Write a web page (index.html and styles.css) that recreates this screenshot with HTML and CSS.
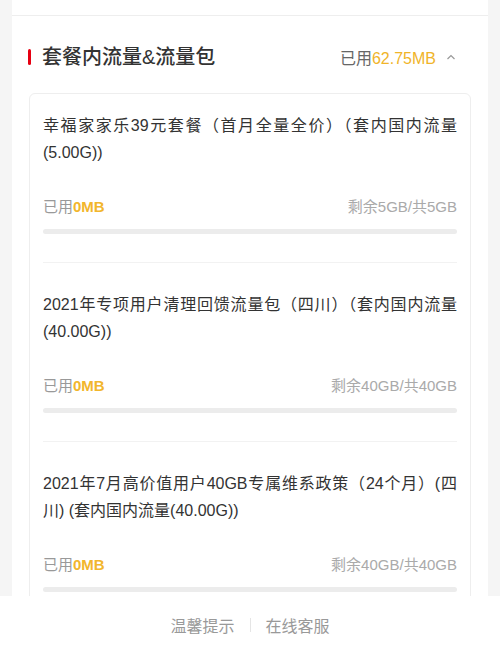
FILE: index.html
```html
<!DOCTYPE html>
<html lang="zh-CN">
<head>
  <meta charset="UTF-8" />
  <title>套餐内流量&amp;流量包</title>
  <meta name="viewport" content="width=device-width, initial-scale=1" />
  <link rel="stylesheet" href="styles.css">
</head>
<body>
  <div class="page">
    <div class="top-block"></div>

    <div class="section-head">
      <span class="mark"></span>
      <h2>套餐内流量&amp;流量包</h2>
      <div class="used-total">已用<span class="num">62.75MB</span></div>
      <svg class="caret" width="10" height="8" viewBox="0 0 10 8">
        <path d="M1.5 6 L5 2.5 L8.5 6" fill="none" stroke="#999" stroke-width="1.2" />
      </svg>
    </div>

    <div class="pkg-card">
      <div class="pkg">
        <div class="pkg-name">幸福家家乐39元套餐（首月全量全价）（套内国内流量(5.00G))</div>
        <div class="pkg-usage">
          <span class="used">已用<b>0MB</b></span>
          <span class="left">剩余5GB/共5GB</span>
        </div>
        <div class="bar"><div class="fill" style="width: 0%"></div></div>
      </div>
      <div class="pkg">
        <div class="pkg-name">2021年专项用户清理回馈流量包（四川）（套内国内流量(40.00G))</div>
        <div class="pkg-usage">
          <span class="used">已用<b>0MB</b></span>
          <span class="left">剩余40GB/共40GB</span>
        </div>
        <div class="bar"><div class="fill" style="width: 0%"></div></div>
      </div>
      <div class="pkg">
        <div class="pkg-name">2021年7月高价值用户40GB专属维系政策（24个月）(四川) (套内国内流量(40.00G))</div>
        <div class="pkg-usage">
          <span class="used">已用<b>0MB</b></span>
          <span class="left">剩余40GB/共40GB</span>
        </div>
        <div class="bar"><div class="fill" style="width: 0%"></div></div>
      </div>
    </div>
  </div>

  <div class="footer">
    <a href="#">温馨提示</a>
    <span class="sep"></span>
    <a href="#">在线客服</a>
  </div>
</body>
</html>
```

FILE: styles.css
```css
html, body {
  height: 100%;
}
body {
  margin: 0;
  font-family: "Liberation Sans", "Noto Sans CJK SC", sans-serif;
  background: #f5f5f5;
  color: #333;
  display: flex;
  flex-direction: column;
  overflow: hidden;
}
.page {
  flex: 1;
  margin: 0 12px;
  background: #fff;
  overflow: hidden;
}
.top-block {
  height: 15px;
  border-bottom: 1px solid #eee;
}
.section-head {
  display: flex;
  align-items: center;
  height: 42px;
  padding: 20px 32px 0 16px;
  margin-bottom: 15px;
}
.mark {
  width: 3px;
  height: 16px;
  background: #e60012;
  border-radius: 2px;
  margin-right: 11px;
}
.section-head h2 {
  flex: 1;
  margin: 0;
  font-size: 20px;
  font-weight: 500;
  color: #333;
  line-height: 42px;
}
.used-total {
  font-size: 16px;
  color: #666;
}
.used-total .num {
  color: #f0b429;
}
.caret {
  margin-left: 10px;
}
.pkg-card {
  margin: 0 17px;
  border: 1px solid #eee;
  border-radius: 6px;
}
.pkg {
  margin: 0 13px;
  padding: 28px 0 28px;
  border-top: 1px solid #f2f2f2;
}
.pkg:first-child {
  padding-top: 18px;
  border-top: none;
}
.pkg-name {
  font-size: 16px;
  line-height: 27px;
  color: #333;
  text-align: justify;
}
.pkg-usage {
  display: flex;
  justify-content: space-between;
  margin-top: 30px;
  font-size: 15px;
  line-height: 22px;
  color: #999;
}
.pkg-usage b {
  color: #f2b62c;
}
.left {
  color: #aaa;
}
.bar {
  height: 5px;
  margin-top: 11px;
  background: #ececec;
  border-radius: 3px;
}
.fill {
  height: 100%;
  background: #f2b62c;
  border-radius: 3px;
}
.footer {
  height: 57px;
  background: #fff;
  display: flex;
  align-items: center;
  justify-content: center;
  font-size: 16px;
}
.footer a {
  color: #999;
  text-decoration: none;
}
.sep {
  width: 1px;
  height: 14px;
  background: #e5e5e5;
  margin: 0 15px;
}
```
